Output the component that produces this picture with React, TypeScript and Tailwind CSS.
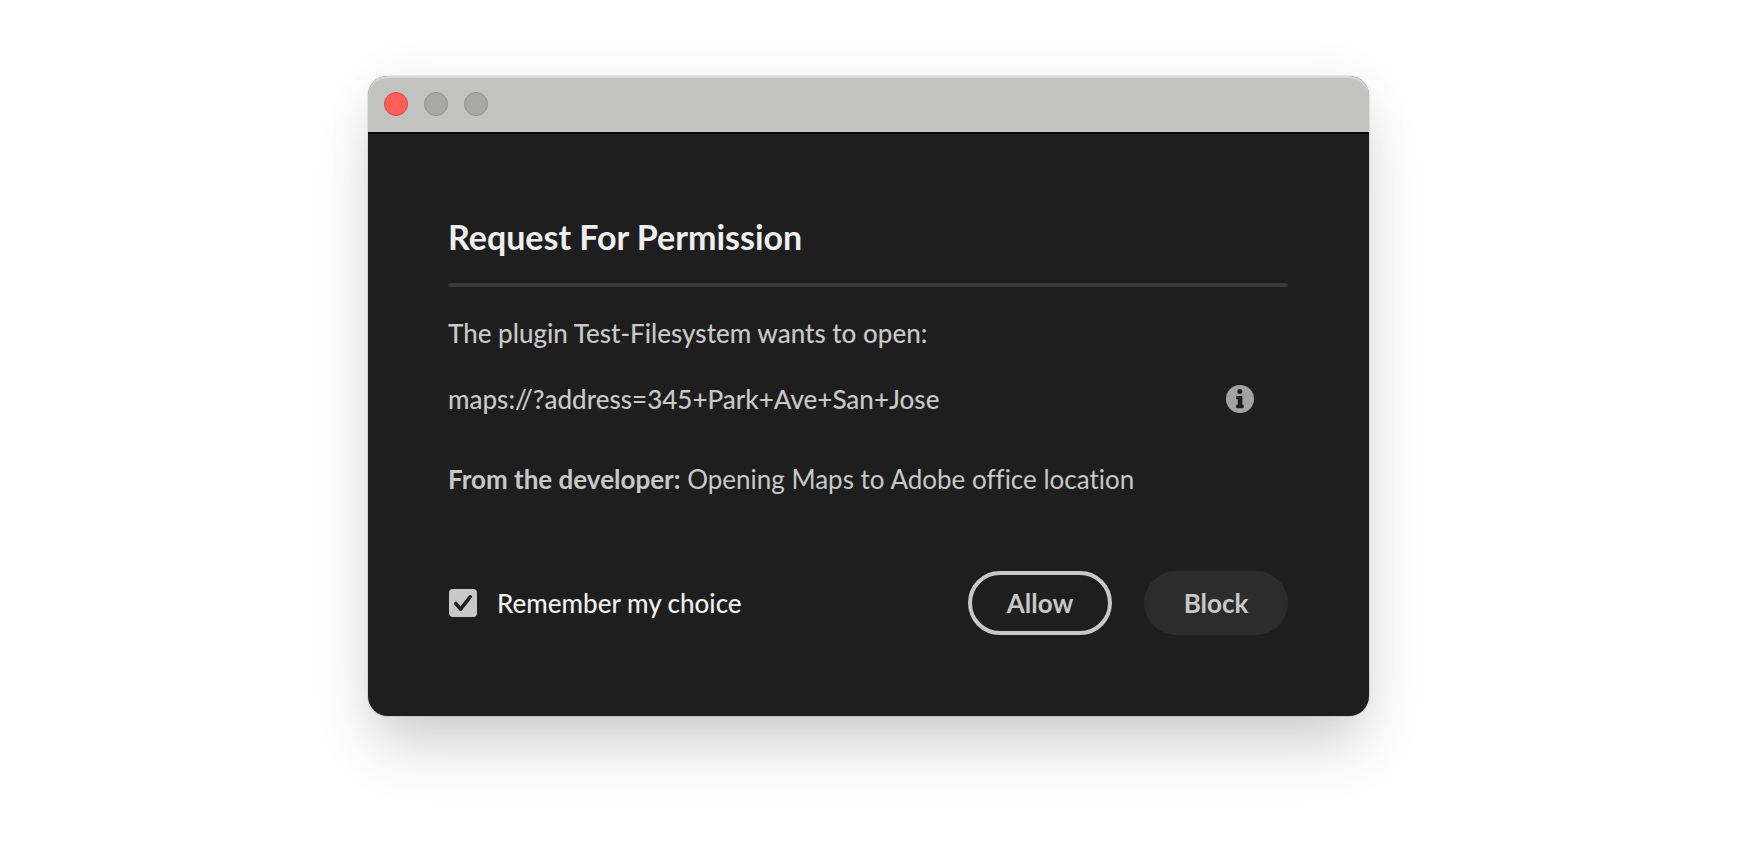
import { useState } from "react";

function TitleBar() {
  return (
    <header className="flex h-[58px] items-center gap-4 rounded-t-[20px] border-b-2 border-black bg-[#c3c3c1] px-4 shadow-[inset_0_2px_1px_#d8d8d6]">
      <button type="button" aria-label="Close" className="size-6 rounded-full border border-[#e0443e] bg-[#ff5f57]" />
      <button type="button" aria-label="Minimize" disabled className="size-6 rounded-full border border-[#8e8e8c] bg-[#a8a8a6]" />
      <button type="button" aria-label="Zoom" disabled className="size-6 rounded-full border border-[#8e8e8c] bg-[#a8a8a6]" />
    </header>
  );
}

function InfoIcon() {
  return (
    <svg viewBox="0 0 28 28" className="size-7" aria-hidden="true">
      <circle cx="14" cy="14" r="14" fill="#a2a2a2" />
      <circle cx="13.8" cy="6.500" r="2.500" fill="#1e1e1e" />
      <path
        d="M10.900 11h4.800a.7.7 0 0 1 .7.7V19.700h.6a.7.7 0 0 1 .7.7v2.100a.7.7 0 0 1-.7.7h-6.100a.7.7 0 0 1-.7-.7v-2.100a.7.7 0 0 1 .7-.7h.9v-5.500h-.9a.7.7 0 0 1-.7-.7v-1.800a.7.7 0 0 1 .7-.7z"
        fill="#1e1e1e"
      />
    </svg>
  );
}

export default function App() {
  const [remember, setRemember] = useState(true);

  return (
    <main className="flex min-h-screen items-start justify-center bg-white pt-[76px] font-['Lato','Open_Sans',sans-serif]">
      <section
        role="dialog"
        aria-labelledby="dialog-title"
        className="w-full max-w-[1001px] rounded-[20px] bg-[#1e1e1e] text-[26px] leading-8 text-[#c8c8c8] shadow-[0_36px_60px_-8px_rgba(0,0,0,0.18),0_0_50px_rgba(0,0,0,0.05),0_0_2px_rgba(0,0,0,0.3)]"
      >
        <TitleBar />
        <div className="pt-[83px] pr-[81px] pb-[81px] pl-20">
          <h1 id="dialog-title" className="text-[34px] leading-10 font-bold text-[#efefef]">
            Request For Permission
          </h1>
          <hr className="mt-[26px] h-1 rounded-full border-0 bg-[#393939]" />
          <p className="mt-[30px] font-medium">The plugin Test-Filesystem wants to open:</p>
          <div className="mt-[34px] flex items-center justify-between pr-[34px]">
            <p className="font-medium">maps://?address=345+Park+Ave+San+Jose</p>
            <button type="button" aria-label="More information">
              <InfoIcon />
            </button>
          </div>
          <p className="mt-12 [font-variant-ligatures:no-common-ligatures]">
            <strong className="font-bold">From the developer:</strong> Opening Maps to Adobe office location
          </p>
          <div className="mt-[76px] flex items-center gap-8">
            <label className="mr-auto flex items-center gap-5 font-medium text-[#efefef]">
              <span className="ml-px grid size-7">
                <input
                  type="checkbox"
                  checked={remember}
                  onChange={(e) => setRemember(e.target.checked)}
                  className="peer col-start-1 row-start-1 size-7 appearance-none rounded border-2 border-[#c8c8c8] checked:bg-[#c8c8c8]"
                />
                <svg
                  viewBox="0 0 28 28"
                  className="pointer-events-none col-start-1 row-start-1 hidden size-7 peer-checked:block"
                  aria-hidden="true"
                >
                  <path d="M6.700 14.500l4.900 5.600L21.200 7.800" fill="none" stroke="#1e1e1e" strokeWidth="3.600" strokeLinecap="round" strokeLinejoin="round" />
                </svg>
              </span>
              Remember my choice
            </label>
            <button type="button" className="h-16 w-36 rounded-full border-4 border-[#c8c8c8] font-bold">
              Allow
            </button>
            <button type="button" className="h-16 w-36 rounded-full bg-[#2c2c2c] font-bold">
              Block
            </button>
          </div>
        </div>
      </section>
    </main>
  );
}
